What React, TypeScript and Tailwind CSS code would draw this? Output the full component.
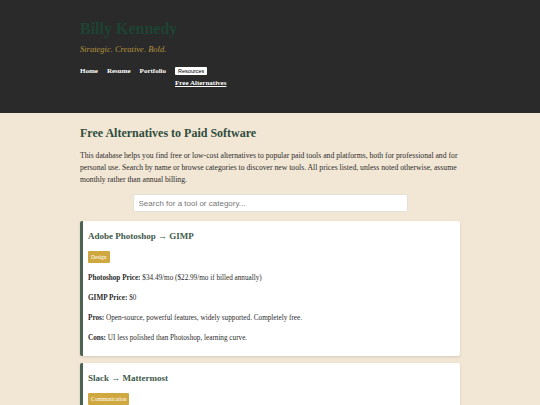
const serif = { fontFamily: '"Liberation Serif", "DejaVu Serif", serif' };

interface Tool {
  title: string;
  category: string;
  rows: { label: string; value: string }[];
}

const tools: Tool[] = [
  {
    title: 'Adobe Photoshop → GIMP',
    category: 'Design',
    rows: [
      { label: 'Photoshop Price:', value: '$34.49/mo ($22.99/mo if billed annually)' },
      { label: 'GIMP Price:', value: '$0' },
      { label: 'Pros:', value: 'Open-source, powerful features, widely supported. Completely free.' },
      { label: 'Cons:', value: 'UI less polished than Photoshop, learning curve.' },
    ],
  },
  {
    title: 'Slack → Mattermost',
    category: 'Communication',
    rows: [
      { label: 'Slack Price:', value: '$8.75/user/mo' },
      { label: 'Mattermost Price:', value: '$0 (self-hosted)' },
    ],
  },
];

function ToolCard({ tool }: { tool: Tool }) {
  return (
    <div className="bg-white border-l-[3px] border-[#4b6352] rounded-[2px] shadow-[0_1px_3px_rgba(0,0,0,0.12)] pl-[5px] pr-3 pt-[9px] pb-[13px]">
      <h3 className="text-[9px] font-bold text-[#3f5a4b] leading-[12px]" style={serif}>
        {tool.title}
      </h3>
      <span className="inline-block mt-[9px] bg-[#cfa83f] text-white text-[5.5px] leading-[12px] px-[3px] rounded-[1px]">
        {tool.category}
      </span>
      <div className="mt-[8px] flex flex-col gap-[11px] text-[7.2px] leading-[9px] text-[#2b2b2b]">
        {tool.rows.map((r) => (
          <p key={r.label}>
            <b>{r.label}</b> {r.value}
          </p>
        ))}
      </div>
    </div>
  );
}

export default function App() {
  return (
    <div className="min-h-[405px] bg-[#f2e6d5] overflow-hidden" style={serif}>
      <header className="bg-[#2a2a2a] h-[113px] px-[80px] pt-[18px]">
        <h1 className="text-[16px] leading-[22px] font-bold text-[#1d4333]">Billy Kennedy</h1>
        <p className="mt-[4px] text-[8.5px] italic text-[#b3923d] leading-[11px]">Strategic. Creative. Bold.</p>
        <nav className="mt-[11px] flex items-start gap-[9px] text-[7px] leading-[10px] text-white font-bold">
          <span>Home</span>
          <span>Resume</span>
          <span>Portfolio</span>
          <div className="flex flex-col items-start">
            <span
              className="bg-white text-black font-normal text-[5.5px] leading-[8px] px-[3px] mt-[1px] rounded-[1px]"
              style={{ fontFamily: '"Liberation Sans", Arial, sans-serif' }}
            >
              Resources
            </span>
            <span className="mt-[3px] underline">Free Alternatives</span>
          </div>
        </nav>
      </header>
      <main className="mx-[80px] pt-[10px]">
        <h2 className="text-[12px] leading-[20px] font-bold text-[#2f4d3d]">Free Alternatives to Paid Software</h2>
        <p className="mt-[7px] text-[7.7px] leading-[12px] text-[#2d2d2d]">
          This database helps you find free or low-cost alternatives to popular paid tools and platforms, both for professional and for
          personal use. Search by name or browse categories to discover new tools. All prices listed, unless noted otherwise, assume
          monthly rather than annual billing.
        </p>
        <div className="mt-[8px] flex justify-center">
          <input
            placeholder="Search for a tool or category..."
            className="w-[275px] h-[18px] bg-white rounded-[2px] border border-[#e5e0d8] px-[5px] text-[8px] placeholder:text-[#777] outline-none"
            style={{ fontFamily: '"Liberation Sans", Arial, sans-serif' }}
          />
        </div>
        <div className="mt-[9px] flex flex-col gap-[7px]">
          {tools.map((t) => (
            <ToolCard key={t.title} tool={t} />
          ))}
        </div>
      </main>
    </div>
  );
}
